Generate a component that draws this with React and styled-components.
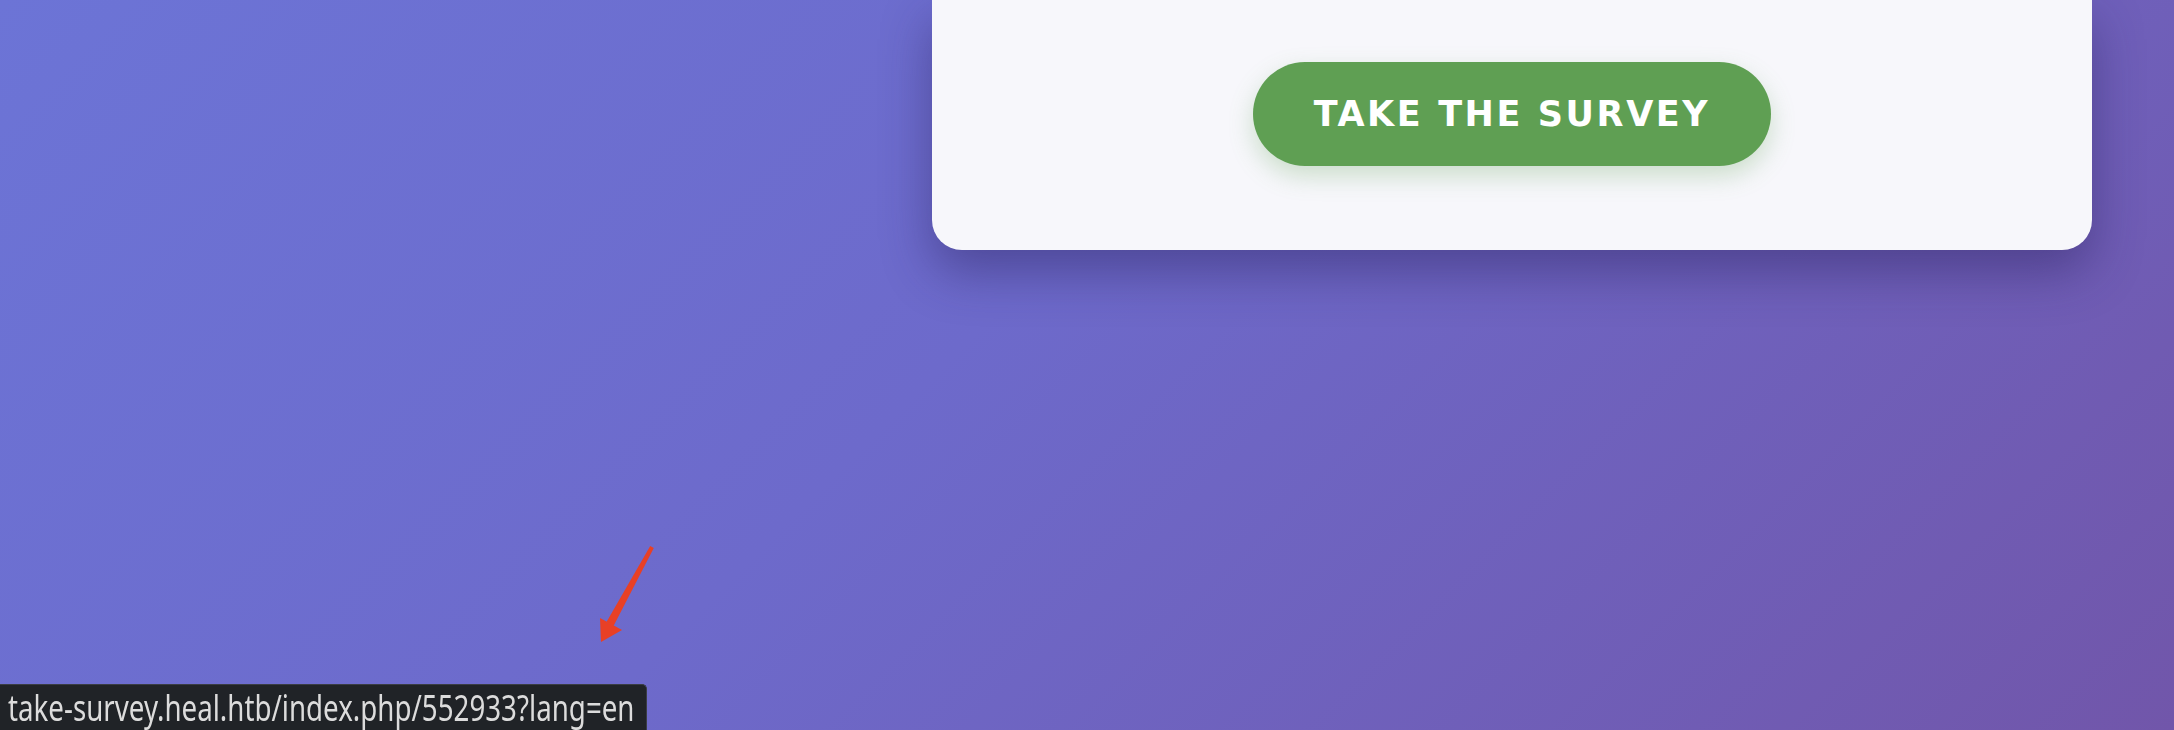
import React from 'react';
import styled, { createGlobalStyle } from 'styled-components';

const GlobalStyle = createGlobalStyle`
  html, body {
    margin: 0;
    padding: 0;
    overflow: hidden;
  }
  body {
    font-family: "DejaVu Sans", Verdana, sans-serif;
  }
`;

const Page = styled.div`
  position: relative;
  height: 100vh;
  display: grid;
  grid-template-columns: 1fr 1160px;
  align-items: start;
  padding-right: 82px;
  background: linear-gradient(135deg, #6c74d6 0%, #6d6acb 45%, #7156aa 100%);
`;

const Intro = styled.div``;

const Card = styled.section`
  background-color: #f7f7fb;
  border-radius: 0 0 30px 30px;
  padding: 62px 0 84px;
  display: flex;
  justify-content: center;
  box-shadow: 0 22px 50px rgba(40, 30, 90, 0.45);
`;

const SurveyButton = styled.a`
  display: inline-flex;
  align-items: center;
  justify-content: center;
  height: 104px;
  width: 518px;
  box-sizing: border-box;
  border-radius: 52px;
  background-color: #5f9f53;
  color: #ffffff;
  font-family: "DejaVu Sans", Verdana, sans-serif;
  font-weight: bold;
  font-size: 35px;
  letter-spacing: 2.6px;
  text-transform: uppercase;
  text-decoration: none;
  box-shadow: 0 10px 24px rgba(95, 159, 83, 0.28);
`;

const StatusBar = styled.div`
  position: fixed;
  left: 0;
  bottom: 0;
  width: 647px;
  height: 46px;
  box-sizing: border-box;
  padding: 5px 0 0 8px;
  background-color: #202327;
  border: 1px solid #3a3d44;
  border-left: none;
  border-bottom: none;
  border-radius: 0 5px 0 0;
`;

/* the status font is tall and narrow, so the glyphs are squeezed sideways */
const StatusText = styled.span`
  display: inline-block;
  margin-right: -215px;
  color: #dcdcdc;
  font-family: "Noto Sans", "Open Sans", sans-serif;
  font-size: 36px;
  line-height: 1;
  white-space: nowrap;
  transform: scaleX(0.77);
  transform-origin: left center;
`;

const Annotation = styled.svg`
  position: absolute;
  left: 590px;
  top: 540px;
  width: 72px;
  height: 110px;
  pointer-events: none;
`;

const Arrow = () => (
  <Annotation viewBox="590 540 72 110">
    <polygon points="650.2,546 653.8,548 613.5,626 606.5,622" fill="#e84025" />
    <polygon points="600,618 622,630 601,642" fill="#e84025" />
  </Annotation>
);

export default function App() {
  return (
    <>
      <GlobalStyle />
      <Page>
        <Intro />
        <Card>
          <SurveyButton href="#">Take the survey</SurveyButton>
        </Card>
        <Arrow />
        <StatusBar>
          <StatusText>take-survey.heal.htb/index.php/552933?lang=en</StatusText>
        </StatusBar>
      </Page>
    </>
  );
}
